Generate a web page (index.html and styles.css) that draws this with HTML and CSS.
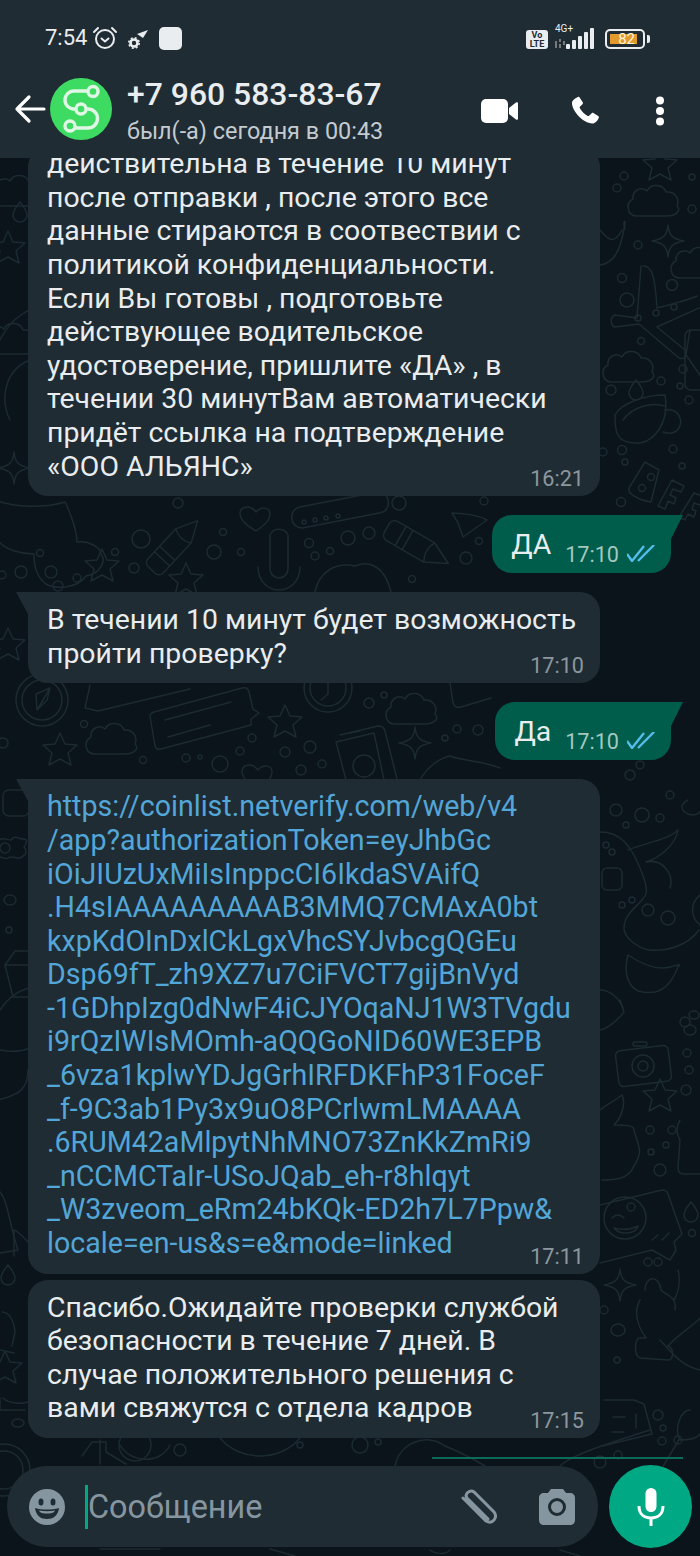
FILE: index.html
```html
<!DOCTYPE html>
<html lang="ru">
<head>
    <meta charset="UTF-8">
    <meta name="viewport" content="width=device-width, initial-scale=1.0">
    <title>Чат</title>
    <link rel="stylesheet" href="styles.css">
</head>
<body>
    <svg class="wallpaper" width="700" height="1556" aria-hidden="true">
        <defs>
            <path id="cloud" d="M-20 16c-10 0-12-13-4-17-1-9 9-13 14-8 4-8 16-7 19 1 9-1 14 7 11 14 5 5-2 10-10 10z"/>
            <path id="star" d="M0-17l5 11 12 1-9 8 3 12-11-6-11 6 3-12-9-8 12-1z"/>
            <path id="star4" d="M0-16c1 10 4 14 16 16-12 2-15 6-16 16-1-10-4-14-16-16 12-2 15-6 16-16z"/>
            <path id="heart" d="M0 14c-8-5-16-10-16-18 0-6 10-9 16-1 5-6 14-5 14 2 0 7-7 12-14 17z"/>
            <path id="pencil" d="M-30-11h43l22 11-22 11h-43a6 6 0 0 1-6-6v-10a6 6 0 0 1 6-6zM-20-11v22M-12-11v22M13-11c-4 7-4 15 0 22"/>
            <path id="drop" d="M0-10c5 6 7 9 7 13a7 7 0 0 1-14 0c0-4 2-7 7-13z"/>
        </defs>
        <g class="doodles">
            <!-- left side -->
            <use href="#cloud" x="20" y="190"/>
            <use href="#star" x="8" y="248"/>
            <use href="#drop" x="20" y="212"/>
            <use href="#cloud" x="14" y="338"/>
            <path d="M0 340c10-20 25-32 50-36M10 420c-10-20-6-50 20-60"/>
            <use href="#star4" x="14" y="468"/>
            <path d="M-5 500c20 8 50 8 70 2 6 12 12 30 12 40 12-2 24 6 24 12 6 8-2 20-15 22-8 12-30 14-40 8-10-8-12-18-12-30-12 0-30-4-36-14"/>
            <circle cx="40" cy="553" r="3.500"/><circle cx="21" cy="572" r="6"/><circle cx="51" cy="572" r="6"/><circle cx="77" cy="578" r="4"/>
            <circle cx="58" cy="586" r="5"/><circle cx="2" cy="575" r="4"/>
            <use href="#pencil" transform="translate(175 545) rotate(-47) scale(.95)"/>
            <circle cx="141" cy="539" r="9"/><circle cx="214" cy="552" r="7"/><circle cx="223" cy="532" r="3.500"/><circle cx="241" cy="552" r="3.500"/><circle cx="178" cy="503" r="5"/>
            <use href="#star" x="102" y="566"/><use href="#star" x="186" y="580"/><circle cx="134" cy="568" r="5"/><circle cx="115" cy="552" r="3.500"/>
            <use href="#heart" x="256" y="517"/>
            <rect x="0" y="0" width="98" height="21" rx="10" transform="translate(290 509) rotate(-11)"/>
            <circle cx="304" cy="522" r="2" /><circle cx="315" cy="520" r="2"/><circle cx="326" cy="518" r="2"/><circle cx="338" cy="516" r="2"/>
            <path d="M270 535a10 10 0 0 1 18 0v34a9 9 0 0 1-18 0zM258 567c0 14 10 23 21 23s21-9 21-23"/>
            <circle cx="309" cy="543" r="4.500"/><circle cx="348" cy="538" r="7"/><circle cx="369" cy="533" r="6"/><circle cx="315" cy="556" r="4"/><circle cx="330" cy="551" r="3.500"/>
            <use href="#pencil" transform="translate(418 546) rotate(30)"/>
            <path d="M452 513c10 0 26 2 35 7l-24 17-5-14z"/>
            <circle cx="399" cy="503" r="7"/><circle cx="484" cy="501" r="4"/><circle cx="479" cy="541" r="3.500"/><circle cx="466" cy="558" r="6"/><circle cx="412" cy="579" r="3.500"/>
            <path d="M315 592c4-20 20-30 40-26 14-6 30 0 36 26"/>
            <use href="#star" x="8" y="645"/>
            <circle cx="42" cy="700" r="26"/><circle cx="42" cy="700" r="20"/><path d="M50 688l-13 22-1-16zM50 688l-3 12-10 10"/>
            <path d="M90 685l-5 23 13 3 92-22"/>
            <path d="M154 712l88-24c4-1 6 0 7 4l4 17 6 4-8 6 0 6-90 24c-3 1-5 0-6-3l-5-30c0-2 1-3 4-4zM165 720l66-18M168 737l42-12"/>
            <use href="#star" x="285" y="722"/><use href="#star" x="60" y="750"/>
            <use href="#cloud" x="115" y="738"/>
            <circle cx="84" cy="724" r="3.500"/><circle cx="252" cy="738" r="4"/><circle cx="240" cy="751" r="4"/><circle cx="186" cy="758" r="4"/><circle cx="200" cy="757" r="2"/><circle cx="220" cy="764" r="8"/><circle cx="143" cy="760" r="3.500"/><circle cx="3" cy="743" r="5"/>
            <circle cx="285" cy="752" r="5"/><circle cx="310" cy="747" r="6"/><circle cx="322" cy="764" r="4"/><circle cx="301" cy="770" r="5"/>
            <circle cx="328" cy="688" r="24"/><circle cx="328" cy="688" r="18"/><path d="M328 682v12l-7 6"/>
            <circle cx="369" cy="703" r="5"/><circle cx="384" cy="695" r="3"/>
            <use href="#cloud" x="415" y="708"/>
            <path d="M340 735l38-9c4 0 6 1 7 5l12 48M346 780l-10-38 38-9 10 47M350 733l10-2"/>
            <circle cx="364" cy="766" r="11"/>
            <use href="#star4" x="415" y="743"/>
            <circle cx="457" cy="729" r="4"/><circle cx="445" cy="738" r="3"/><circle cx="478" cy="730" r="5"/>
            <use href="#heart" x="258" y="775"/>
            <path d="M420 780c8-14 20-22 30-24 8 4 30 4 50 12"/>
            <path d="M450 683l3 20c1 4 4 5 8 4l30-9"/>
            <!-- left, lower -->
            <rect x="3" y="790" width="26" height="26" rx="6"/>
            <path d="M-3 840c8-3 10 0 14 0 4-6 9 0 13-1 4 0 2 6 0 8 3 4 3 7-1 9-3 5-9 0-13 1-5 4-10-1-13-1"/>
            <circle cx="5" cy="848" r="5"/><ellipse cx="10" cy="900" rx="6" ry="5"/><circle cx="9" cy="930" r="3"/>
            <path d="M5 965l10-14h14v10M5 965l8 32h15M5 965h23"/>
            <path d="M0 1010c10-15 20-20 30-22M0 1050c10 2 20 2 30-2M-2 1100c20-5 30-10 30-30"/>
            <path d="M-2 1190c10 8 10 30 20 60l-18 3"/>
            <use href="#drop" x="8" y="1275"/>
            <path d="M15 1230c5 4 10 8 13 12M14 1230v26"/>
            <path d="M2 1312c8 0 12 10 13 20l-3 14M0 1350l14 3"/>
            <use href="#star" x="5" y="1368"/>
            <path d="M3 1398c6 6 20 6 25 4M0 1398v12h25"/>
            <ellipse cx="18" cy="1423" rx="6" ry="4"/>
            <circle cx="4" cy="1470" r="26"/><circle cx="4" cy="1470" r="19"/>
            <!-- bottom strip -->
            <path d="M100 1440v24M82 1456l10-14h14v10l20 12"/>
            <path d="M120 1445c10 18 40 20 50 0"/><circle cx="135" cy="1445" r="16"/><circle cx="180" cy="1450" r="6"/>
            <path d="M220 1438c20 24 60 24 80 0"/><circle cx="300" cy="1445" r="3"/>
            <circle cx="360" cy="1445" r="8"/><circle cx="378" cy="1442" r="3"/>
            <path d="M395 1466c4-22 30-34 50-20 15 6 30 14 40 20"/>
            <path d="M560 1466c10-10 40-20 90-36"/><circle cx="600" cy="1462" r="6"/><circle cx="618" cy="1455" r="4"/>
            <path d="M680 1438l-18 30"/>
            <path d="M100 1549h60M270 1549l25 7M430 1550c5 4 15 5 20 0M560 1550l20 6"/>
            <!-- right side -->
            <use href="#star" x="660" y="165"/><circle cx="624" cy="176" r="4"/><circle cx="617" cy="188" r="4"/><circle cx="692" cy="177" r="3"/><circle cx="692" cy="209" r="4"/>
            <use href="#cloud" x="657" y="200"/>
            <path d="M600 265c14-2 20-14 24-36 3-12-2-8 1 0M600 230c8 10 14 15 22 0"/>
            <use href="#star4" x="668" y="241"/><circle cx="638" cy="245" r="4"/>
            <use href="#cloud" x="700" y="262"/>
            <path d="M643 266c9 0 12 10 14 42 20-5 32-8 40-12M641 266l-4 52-22-3c-5 2-5 10 0 12l24-3 40 34c5 2 10-2 6-8l-28-23 44-20"/>
            <circle cx="622" cy="278" r="4.500"/><circle cx="627" cy="300" r="7"/><circle cx="672" cy="285" r="5.500"/><circle cx="638" cy="318" r="3"/><circle cx="656" cy="313" r="3"/><circle cx="674" cy="307" r="3"/><circle cx="641" cy="341" r="3.500"/>
            <use href="#cloud" x="632" y="366"/>
            <circle cx="683" cy="369" r="4"/><circle cx="661" cy="381" r="4"/><circle cx="680" cy="386" r="3"/><circle cx="611" cy="390" r="5"/><circle cx="689" cy="400" r="4"/>
            <use href="#drop" x="636" y="390"/>
            <path d="M690 330l-4 25 14 20"/>
            <path d="M615 415c6-12 30-20 50-20 5 30-14 50-30 48-20 0-20-14-20-28zM623 420c10-14 30-18 42-14M665 410c14-2 18 10 14 18-4 6-10 6-16 4"/>
            <circle cx="622" cy="450" r="4.500"/><circle cx="625" cy="462" r="3"/><circle cx="673" cy="449" r="4"/><circle cx="682" cy="466" r="3"/><circle cx="621" cy="502" r="4.500"/><circle cx="603" cy="452" r="4"/>
            <path d="M645 462l14 8-8 32c-12-2-24-8-22-14z"/><circle cx="651" cy="477" r="3.500"/><circle cx="642" cy="488" r="3.500"/>
            <path d="M672 480l12 6-3 6-8-3-3 6 6 3-2 6-6-3-3 8-7-3z"/><path d="M694 493l10 4-4 8-6-2-2 6 4 2-2 6-6-3-3 6-6-3z"/>
            <rect x="685" y="330" width="24" height="60" rx="6"/>
            <circle cx="640" cy="765" r="4"/><circle cx="670" cy="795" r="4"/><circle cx="616" cy="810" r="6"/><circle cx="642" cy="815" r="7"/><circle cx="660" cy="818" r="4"/><circle cx="626" cy="825" r="3"/><circle cx="630" cy="775" r="5"/>
            <path d="M688 800c-8 4-8 10 0 14 6 2 10 0 12-2"/>
            <path d="M600 832c20 0 30 12 40 36 3 8 8 18 6 26-4 10-22 18-22 34 0 10 14 20 25 22 20 2 40-6 50-20M628 850c20-8 40-10 50-20-2 14-18 28-32 32 18-4 28 14 24 26"/>
            <path d="M628 955c-4 14-2 30 10 36 16 4 30 2 40-24 4-4 0-2-8 0-14 4-30-4-42-12zM700 895c-10 8-10 22 0 30"/>
            <circle cx="648" cy="910" r="6"/><circle cx="668" cy="918" r="7"/><circle cx="606" cy="845" r="3"/><circle cx="612" cy="852" r="3"/><circle cx="632" cy="900" r="3"/><circle cx="622" cy="905" r="3"/>
            <rect x="602" y="868" width="20" height="22" rx="5"/>
            <path d="M600 990c8 0 20 6 24 22-8 10-16 16-24 18M620 1000l3 8"/>
            <rect x="617" y="1048" width="53" height="36" rx="5" transform="rotate(-7 643 1066)"/>
            <circle cx="643" cy="1066" r="11"/><circle cx="643" cy="1066" r="5"/><rect x="633" y="1042" width="14" height="4" rx="2"/>
            <use href="#star" x="660" y="1096"/>
            <circle cx="686" cy="1090" r="5"/><circle cx="687" cy="1053" r="4"/><circle cx="689" cy="1070" r="4"/><ellipse cx="690" cy="1030" rx="6" ry="5"/><ellipse cx="694" cy="1015" rx="5" ry="4"/><circle cx="685" cy="1022" r="5"/>
            <path d="M600 1110c4-4 16-10 22-15 4 8 0 22-8 30 10 0 20 0 20 5 4 16 10 20 0 36-6 14-20 14-32 14"/>
            <path d="M680 1120c-4 6-4 14 0 20l-2 28c0 4 2 6 6 6h20"/>
            <circle cx="650" cy="1130" r="4"/><circle cx="672" cy="1130" r="4"/><circle cx="666" cy="1145" r="3"/><circle cx="651" cy="1152" r="3"/><circle cx="660" cy="1170" r="6"/>
            <use href="#drop" x="691" y="1212"/><circle cx="692" cy="1233" r="3.500"/>
            <path d="M600 1205l62-15c3 0 5 1 6 4l14 40-8 8 2 8-6 10-18-10-52 13"/>
            <circle cx="625" cy="1218" r="21"/><circle cx="631" cy="1207" r="4"/><path d="M612 1218c4-4 8-4 12 0M614 1228c8 2 16 2 24-2-2 8-18 10-24 2z"/>
            <path d="M652 1240l6-5M662 1240l7-7"/>
            <use href="#star4" x="620" y="1285"/>
            <circle cx="648" cy="1262" r="4"/><circle cx="658" cy="1262" r="4"/><circle cx="604" cy="1310" r="4"/><ellipse cx="618" cy="1330" rx="7" ry="6"/><circle cx="617" cy="1360" r="3"/>
            <path d="M640 1300c-6 10-4 24 6 38h-6c-6 0-6 18 0 20l28 2c6 0 6-12 0-14 10-12 26-20 34-30M645 1290c0-14 14-16 16 0 6 6 16 6 14 20M678 1270c2 8 2 20-4 30M660 1340c10 10 20 26 40 30"/>
            <path d="M604 1400h30l10 4 8 30-50 12"/>
            <path d="M613 1417h12M612 1432h12M636 1414v14"/>
            <circle cx="658" cy="1415" r="5"/><circle cx="663" cy="1428" r="3"/><circle cx="662" cy="1441" r="4"/><circle cx="678" cy="1440" r="4"/>
            <path d="M690 1410c-10 0-16 20-10 30 4 0 16 0 20-6"/>
        </g>
    </svg>

    <header class="topbar">
        <div class="status-bar">
            <div class="status-left">
                <span class="clock">7:54</span>
                <svg class="st-alarm" width="26" height="26" viewBox="0 0 26 26" fill="none" stroke="#e9edef" stroke-width="2" stroke-linecap="round">
                    <circle cx="13" cy="14" r="9"/>
                    <path d="M9.500 13.500l3.500 3 3.500-3"/>
                    <path d="M2 7l4-4M24 7l-4-4"/>
                </svg>
                <svg class="st-gear" width="20" height="20" viewBox="0 0 20 20">
                    <path d="M9 4l11-4-5 8z" fill="#e9edef"/>
                    <circle cx="6" cy="13" r="3.500" fill="none" stroke="#e9edef" stroke-width="2.600"/>
                    <circle cx="6" cy="13" r="5.200" fill="none" stroke="#e9edef" stroke-width="1.600" stroke-dasharray="2 2.100"/>
                </svg>
                <span class="st-square"></span>
            </div>
            <div class="status-right">
                <span class="volte">Vo<br>LTE</span>
                <div class="signal">
                    <span class="net">4G+</span>
                    <svg width="43" height="21" viewBox="0 0 43 21">
                        <path d="M3 13v7M7 11v3M7 16v4M11 13v4" stroke="#75797c" stroke-width="2" fill="none"/>
                        <rect x="13" y="16" width="4" height="5" rx="1" fill="#e9edef"/>
                        <rect x="19" y="12" width="4" height="9" rx="1" fill="#e9edef"/>
                        <rect x="25" y="8" width="4" height="13" rx="1" fill="#e9edef"/>
                        <rect x="31" y="4" width="4" height="17" rx="1" fill="#e9edef"/>
                        <rect x="37" y="0" width="4" height="21" rx="1" fill="#e9edef"/>
                    </svg>
                </div>
                <div class="battery">
                    <div class="battery-body"><span class="battery-fill">82</span></div>
                    <span class="battery-cap"></span>
                </div>
            </div>
        </div>
        <div class="contact-bar">
            <svg class="back" width="32" height="30" viewBox="0 0 32 30" fill="none" stroke="#fff" stroke-width="3.200" stroke-linecap="round" stroke-linejoin="round">
                <path d="M30 15H3M15 3L3 15l12 12"/>
            </svg>
            <svg class="avatar" width="62" height="62" viewBox="0 0 62 62">
                <circle cx="31" cy="31" r="31" fill="#3edb62"/>
                <g fill="none" stroke="#dff7e4" stroke-width="3.400" stroke-linecap="round">
                    <path d="M38 13H24a9 9 0 0 0 0 18h14a9.500 9.500 0 0 1 0 19H24"/>
                    <circle cx="43" cy="13.500" r="5" fill="#3edb62"/>
                    <circle cx="31" cy="31" r="5" fill="#3edb62"/>
                    <circle cx="20" cy="48" r="5" fill="#3edb62"/>
                </g>
            </svg>
            <div class="contact-info">
                <div class="contact-name">+7 960 583-83-67</div>
                <div class="contact-seen">был(-а) сегодня в 00:43</div>
            </div>
            <div class="actions">
                <svg width="37" height="24" viewBox="0 0 37 24" fill="#fff">
                    <rect x="0" y="0" width="27" height="24" rx="5"/>
                    <path d="M28 9l7-5.500c1-.7 2-.2 2 1v15c0 1.200-1 1.700-2 1l-7-5.500z"/>
                </svg>
                <svg width="32" height="32" viewBox="0 0 24 24" fill="#fff">
                    <path d="M6.600 1.500c.5-.3 1.100-.2 1.400.3l2.300 3.700c.3.500.2 1-.2 1.400L8.300 8.700c-.3.300-.4.700-.2 1 .9 1.900 3.700 4.900 6 6 .4.200.7.100 1-.2l1.900-1.800c.4-.4.900-.4 1.300-.2l3.600 2.200c.6.300.7 1 .4 1.500-.8 2-2.800 4.200-4.800 4.200C10.800 21.400 1.600 11.600 2.300 5.500c.2-1.600 2.800-3.300 4.300-4z"/>
                </svg>
                <svg width="10" height="30" viewBox="0 0 10 30" fill="#fff">
                    <circle cx="5" cy="4.500" r="4"/>
                    <circle cx="5" cy="15" r="4"/>
                    <circle cx="5" cy="25.500" r="4"/>
                </svg>
            </div>
        </div>
    </header>

    <main class="chat">
        <div class="bubble incoming first">
            <p>действительна в течение 10 минут
после отправки , после этого все
данные стираются в соотвествии с
политикой конфиденциальности.
Если Вы готовы , подготовьте
действующее водительское
удостоверение, пришлите «ДА» , в
течении 30 минутВам автоматически
придёт ссылка на подтверждение</p>
            <div class="last-row">
                <p>«ООО АЛЬЯНС»</p>
                <span class="time">16:21</span>
            </div>
        </div>

        <div class="bubble outgoing">
            <p>ДА</p>
            <span class="time">17:10</span>
            <svg class="ticks" width="28" height="17" viewBox="0 0 28 17" fill="none" stroke="#53bdeb" stroke-width="2.400">
                <path d="M0 9l5 7L17 1M11 16L27 0"/>
            </svg>
        </div>

        <div class="bubble incoming tail">
            <p>В течении 10 минут будет возможность</p>
            <div class="last-row">
                <p>пройти проверку?</p>
                <span class="time">17:10</span>
            </div>
        </div>

        <div class="bubble outgoing">
            <p>Да</p>
            <span class="time">17:10</span>
            <svg class="ticks" width="28" height="17" viewBox="0 0 28 17" fill="none" stroke="#53bdeb" stroke-width="2.400">
                <path d="M0 9l5 7L17 1M11 16L27 0"/>
            </svg>
        </div>

        <div class="bubble incoming tail">
            <p class="link">https://coinlist.netverify.com/web/v4
/app?authorizationToken=eyJhbGc
iOiJIUzUxMiIsInppcCI6IkdaSVAifQ
.H4sIAAAAAAAAAB3MMQ7CMAxA0bt
kxpKdOInDxlCkLgxVhcSYJvbcgQGEu
Dsp69fT_zh9XZ7u7CiFVCT7gijBnVyd
-1GDhpIzg0dNwF4iCJYOqaNJ1W3TVgdu
i9rQzIWIsMOmh-aQQGoNID60WE3EPB
_6vza1kplwYDJgGrhIRFDKFhP31FoceF
_f-9C3ab1Py3x9uO8PCrlwmLMAAAA
.6RUM42aMlpytNhMNO73ZnKkZmRi9
_nCCMCTaIr-USoJQab_eh-r8hlqyt
_W3zveom_eRm24bKQk-ED2h7L7Ppw&amp;</p>
            <div class="last-row">
                <p class="link">locale=en-us&amp;s=e&amp;mode=linked</p>
                <span class="time">17:11</span>
            </div>
        </div>

        <div class="bubble incoming thanks">
            <p>Спасибо.Ожидайте проверки службой
безопасности в течение 7 дней. В
случае положительного решения с</p>
            <div class="last-row">
                <p>вами свяжутся с отдела кадров</p>
                <span class="time">17:15</span>
            </div>
        </div>
    </main>

    <div class="progress-line"></div>

    <footer class="composer">
        <div class="input-box">
            <svg width="36" height="36" viewBox="0 0 36 36">
                <circle cx="18" cy="18" r="18" fill="#8696a0"/>
                <ellipse cx="12" cy="13" rx="2.500" ry="3.500" fill="#202c33"/>
                <ellipse cx="24" cy="13" rx="2.500" ry="3.500" fill="#202c33"/>
                <path d="M6 19c7 2 17 2 24 0-1 8-6 11-12 11S7 27 6 19z" fill="#202c33"/>
                <path d="M10 21.500c5 1 11 1 16 0-1 2-2 3-8 3s-7-1-8-3z" fill="#8696a0"/>
            </svg>
            <span class="caret"></span>
            <span class="placeholder">Сообщение</span>
            <svg class="clip" width="40" height="36" viewBox="0 0 40 36" fill="none" stroke="#8696a0" stroke-width="3" stroke-linecap="round">
                <path d="M30 30L9 9c-3-4 3-9 7-6l20 20c4 5-1 13-8 9L5 9"/>
            </svg>
            <svg class="camera" width="36" height="36" viewBox="0 0 36 36">
                <path d="M5 4h4l3-4h12l3 4h4c3 0 5 2 5 5v22c0 3-2 5-5 5H5c-3 0-5-2-5-5V9c0-3 2-5 5-5z" fill="#8696a0"/>
                <circle cx="18" cy="18" r="7.500" fill="none" stroke="#202c33" stroke-width="3"/>
            </svg>
        </div>
        <button class="mic" aria-label="Голосовое сообщение">
            <svg width="28" height="38" viewBox="0 0 28 38" fill="none">
                <rect x="8.500" y="0" width="11" height="24" rx="5.500" fill="#fff"/>
                <path d="M2 18c0 8 5 12 12 12s12-4 12-12M14 30v8" stroke="#fff" stroke-width="3"/>
            </svg>
        </button>
    </footer>
</body>
</html>
```

FILE: styles.css
```css
* {
    margin: 0;
    padding: 0;
    box-sizing: border-box;
}

body {
    position: relative;
    width: 700px;
    height: 1556px;
    display: flex;
    flex-direction: column;
    overflow: hidden;
    background-color: #0a141a;
    color: #e9edef;
    font-family: Roboto, sans-serif;
}

.wallpaper {
    position: absolute;
    top: 0;
    left: 0;
}

.doodles {
    fill: none;
    stroke: #1c2a31;
    stroke-width: 1.500;
    stroke-linejoin: round;
    stroke-linecap: round;
}

/* top bar */
.topbar {
    position: relative;
    z-index: 2;
    height: 158px;
    flex: none;
    background-color: #202c33;
}

.status-bar {
    height: 76px;
    padding: 22px 50px 0 45px;
    display: flex;
    justify-content: space-between;
    align-items: flex-start;
}

.status-left {
    display: flex;
    align-items: center;
}

.clock {
    font-size: 22px;
    line-height: 32px;
    color: #e9edef;
}

.st-alarm {
    margin-left: 5px;
}

.st-gear {
    margin-left: 10px;
    margin-top: 4px;
}

.st-square {
    width: 23px;
    height: 23px;
    margin-left: 11px;
    border-radius: 5px;
    background-color: #e9edef;
}

.status-right {
    display: flex;
    align-items: flex-end;
    padding-top: 6px;
}

.volte {
    width: 22px;
    height: 19px;
    border-radius: 3px;
    background-color: #e9edef;
    color: #202c33;
    font-size: 9px;
    font-weight: 700;
    line-height: 9px;
    text-align: center;
    padding-top: 1px;
}

.signal {
    position: relative;
    margin-left: 5px;
    width: 43px;
    height: 21px;
}

.net {
    position: absolute;
    top: -4px;
    left: 2px;
    font-size: 10px;
    line-height: 10px;
    color: #e9edef;
}

.battery {
    display: flex;
    align-items: center;
    margin-left: 9px;
}

.battery-body {
    width: 40px;
    height: 20px;
    padding: 3px;
    border: 2px solid #e9edef;
    border-radius: 5px;
}

.battery-fill {
    display: block;
    width: 27px;
    height: 10px;
    padding-right: 2px;
    background-color: #e39a2d;
    color: #fff3d8;
    font-size: 15px;
    line-height: 10px;
    text-align: right;
}

.battery-cap {
    width: 3px;
    height: 8px;
    margin-left: 2px;
    border-radius: 0 2px 2px 0;
    background-color: #e9edef;
}

.contact-bar {
    display: flex;
    align-items: flex-start;
}

.back {
    margin: 18px 0 0 14px;
}

.avatar {
    margin-left: 4px;
    margin-top: 2px;
}

.contact-info {
    margin-left: 15px;
}

.contact-name {
    font-size: 31.900px;
    font-weight: 500;
    line-height: 36px;
    color: #e9edef;
}

.contact-seen {
    margin-top: 5px;
    font-size: 23.400px;
    line-height: 28px;
    color: #c3cbd0;
}

.actions {
    margin-left: auto;
    padding: 19px 35px 0 0;
    display: flex;
    align-items: center;
}

.actions svg:nth-child(2) {
    margin-left: 51px;
}

.actions svg:nth-child(3) {
    margin-left: 54px;
}

/* messages */
.chat {
    position: relative;
    z-index: 1;
    height: 1280px;
    flex: none;
    display: flex;
    flex-direction: column;
    justify-content: flex-end;
    overflow: hidden;
}

.bubble {
    position: relative;
    font-size: 28.400px;
    line-height: 33.600px;
    flex: none;
}

.bubble p {
    white-space: pre-line;
}

.incoming {
    width: 572px;
    margin: 19px 0 0 28px;
    padding: 11px 10px 13px 19px;
    border-radius: 20px;
    background-color: #202c33;
    color: #e9edef;
}

.incoming.tail {
    border-top-left-radius: 0;
}

.incoming.tail::before {
    content: "";
    position: absolute;
    top: 0;
    left: -12px;
    border-top: 22px solid #202c33;
    border-left: 12px solid transparent;
}

.incoming.first {
    margin-top: 0;
    padding-top: 0;
}

.last-row {
    display: flex;
    justify-content: space-between;
    align-items: flex-end;
    height: 33.600px;
}

.last-row .time {
    flex: none;
    margin: 0 6px -8px 0;
    color: #8c979e;
}

.time {
    font-size: 21.600px;
    line-height: 24px;
}

.outgoing {
    align-self: flex-end;
    display: flex;
    align-items: flex-start;
    height: 58px;
    margin: 19px 29px 0 0;
    padding: 10px 16px 0 19px;
    border-radius: 20px 0 20px 20px;
    background-color: #005c4b;
    color: #e9edef;
}

.outgoing::after {
    content: "";
    position: absolute;
    top: 0;
    right: -12px;
    border-top: 24px solid #005c4b;
    border-right: 12px solid transparent;
}

.outgoing p {
    padding-top: 3px;
}

.outgoing .time {
    margin: 18px 0 0 14px;
    color: #a3c8bf;
}

.ticks {
    margin: 20px 0 0 8px;
}

.link {
    color: #53a6d8;
    font-size: 28.600px;
}

.thanks {
    margin-top: 6px;
}

.progress-line {
    position: relative;
    z-index: 1;
    width: 251px;
    height: 2px;
    margin: 19px 0 0 432px;
    flex: none;
    background-color: #0c6b58;
}

/* bottom input */
.composer {
    position: relative;
    z-index: 1;
    display: flex;
    align-items: center;
    padding: 6px 8px 0 7px;
}

.input-box {
    width: 591px;
    height: 81px;
    padding: 0 23px 0 22px;
    display: flex;
    align-items: center;
    border-radius: 40px;
    background-color: #202c33;
}

.caret {
    width: 3px;
    height: 44px;
    margin-left: 20px;
    background-color: #00a884;
}

.placeholder {
    font-size: 32.400px;
    color: #8696a0;
}

.clip {
    margin-left: auto;
}

.camera {
    margin-left: 41px;
}

.mic {
    width: 83px;
    height: 83px;
    margin-left: 11px;
    border: none;
    border-radius: 50%;
    background-color: #00a884;
    display: flex;
    align-items: center;
    justify-content: center;
}
```
